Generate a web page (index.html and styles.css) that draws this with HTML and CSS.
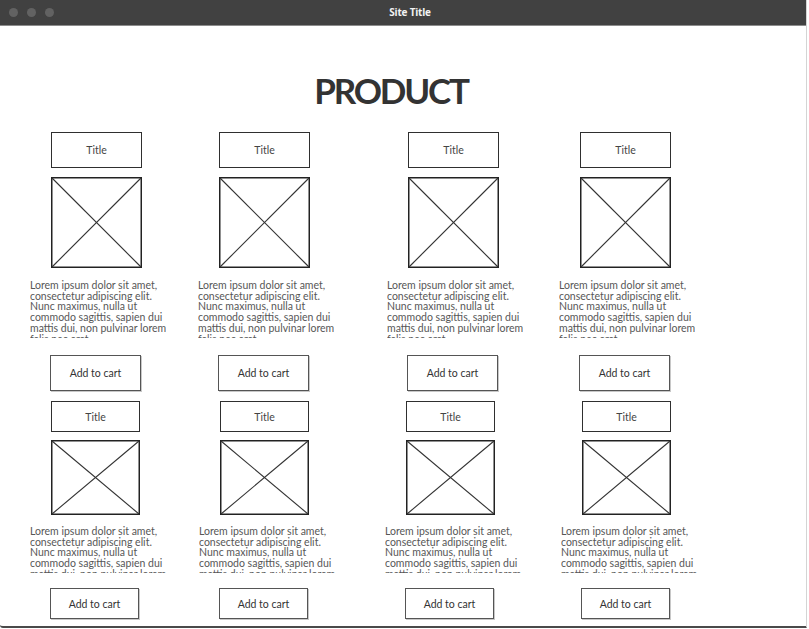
FILE: index.html
```html
<!DOCTYPE html>
<html lang="en">
<head>
<meta charset="utf-8">
<title>Site Title</title>
<link rel="stylesheet" href="styles.css">
</head>
<body>
<div class="window">
  <div class="titlebar">
    <div class="dots"><span class="dot"></span><span class="dot"></span><span class="dot"></span></div>
    <div class="site-title">Site Title</div>
  </div>
  <main class="content">
    <h1 class="heading">PRODUCT</h1>

    <section class="row row-top">
      <div class="card">
        <div class="title-box">Title</div>
        <svg class="placeholder" viewBox="0 0 91 91" preserveAspectRatio="none"><rect x="0.75" y="0.75" width="89.5" height="89.5"/><line x1="1" y1="1" x2="90" y2="90"/><line x1="90" y1="1" x2="1" y2="90"/></svg>
        <p class="desc">Lorem ipsum dolor sit amet,<br>consectetur adipiscing elit.<br>Nunc maximus, nulla ut<br>commodo sagittis, sapien dui<br>mattis dui, non pulvinar lorem<br>felis nec erat.</p>
        <button class="cart-btn">Add to cart</button>
      </div>
      <div class="card">
        <div class="title-box">Title</div>
        <svg class="placeholder" viewBox="0 0 91 91" preserveAspectRatio="none"><rect x="0.75" y="0.75" width="89.5" height="89.5"/><line x1="1" y1="1" x2="90" y2="90"/><line x1="90" y1="1" x2="1" y2="90"/></svg>
        <p class="desc">Lorem ipsum dolor sit amet,<br>consectetur adipiscing elit.<br>Nunc maximus, nulla ut<br>commodo sagittis, sapien dui<br>mattis dui, non pulvinar lorem<br>felis nec erat.</p>
        <button class="cart-btn">Add to cart</button>
      </div>
      <div class="card">
        <div class="title-box">Title</div>
        <svg class="placeholder" viewBox="0 0 91 91" preserveAspectRatio="none"><rect x="0.75" y="0.75" width="89.5" height="89.5"/><line x1="1" y1="1" x2="90" y2="90"/><line x1="90" y1="1" x2="1" y2="90"/></svg>
        <p class="desc">Lorem ipsum dolor sit amet,<br>consectetur adipiscing elit.<br>Nunc maximus, nulla ut<br>commodo sagittis, sapien dui<br>mattis dui, non pulvinar lorem<br>felis nec erat.</p>
        <button class="cart-btn">Add to cart</button>
      </div>
      <div class="card">
        <div class="title-box">Title</div>
        <svg class="placeholder" viewBox="0 0 91 91" preserveAspectRatio="none"><rect x="0.75" y="0.75" width="89.5" height="89.5"/><line x1="1" y1="1" x2="90" y2="90"/><line x1="90" y1="1" x2="1" y2="90"/></svg>
        <p class="desc">Lorem ipsum dolor sit amet,<br>consectetur adipiscing elit.<br>Nunc maximus, nulla ut<br>commodo sagittis, sapien dui<br>mattis dui, non pulvinar lorem<br>felis nec erat.</p>
        <button class="cart-btn">Add to cart</button>
      </div>
    </section>

    <section class="row row-bottom">
      <div class="card">
        <div class="title-box">Title</div>
        <svg class="placeholder" viewBox="0 0 89 75" preserveAspectRatio="none"><rect x="0.75" y="0.75" width="87.5" height="73.5"/><line x1="1" y1="1" x2="88" y2="74"/><line x1="88" y1="1" x2="1" y2="74"/></svg>
        <p class="desc">Lorem ipsum dolor sit amet,<br>consectetur adipiscing elit.<br>Nunc maximus, nulla ut<br>commodo sagittis, sapien dui<br>mattis dui, non pulvinar lorem</p>
        <button class="cart-btn">Add to cart</button>
      </div>
      <div class="card">
        <div class="title-box">Title</div>
        <svg class="placeholder" viewBox="0 0 89 75" preserveAspectRatio="none"><rect x="0.75" y="0.75" width="87.5" height="73.5"/><line x1="1" y1="1" x2="88" y2="74"/><line x1="88" y1="1" x2="1" y2="74"/></svg>
        <p class="desc">Lorem ipsum dolor sit amet,<br>consectetur adipiscing elit.<br>Nunc maximus, nulla ut<br>commodo sagittis, sapien dui<br>mattis dui, non pulvinar lorem</p>
        <button class="cart-btn">Add to cart</button>
      </div>
      <div class="card">
        <div class="title-box">Title</div>
        <svg class="placeholder" viewBox="0 0 89 75" preserveAspectRatio="none"><rect x="0.75" y="0.75" width="87.5" height="73.5"/><line x1="1" y1="1" x2="88" y2="74"/><line x1="88" y1="1" x2="1" y2="74"/></svg>
        <p class="desc">Lorem ipsum dolor sit amet,<br>consectetur adipiscing elit.<br>Nunc maximus, nulla ut<br>commodo sagittis, sapien dui<br>mattis dui, non pulvinar lorem</p>
        <button class="cart-btn">Add to cart</button>
      </div>
      <div class="card">
        <div class="title-box">Title</div>
        <svg class="placeholder" viewBox="0 0 89 75" preserveAspectRatio="none"><rect x="0.75" y="0.75" width="87.5" height="73.5"/><line x1="1" y1="1" x2="88" y2="74"/><line x1="88" y1="1" x2="1" y2="74"/></svg>
        <p class="desc">Lorem ipsum dolor sit amet,<br>consectetur adipiscing elit.<br>Nunc maximus, nulla ut<br>commodo sagittis, sapien dui<br>mattis dui, non pulvinar lorem</p>
        <button class="cart-btn">Add to cart</button>
      </div>
    </section>
  </main>
</div>
</body>
</html>
```

FILE: styles.css
```css
* { box-sizing: border-box; }

html, body {
  margin: 0;
  padding: 0;
  background: #ffffff;
}

body {
  font-family: Lato, "Open Sans", "Liberation Sans", sans-serif;
  color: #333;
}

.window {
  width: 807px;
  height: 628px;
  border-right: 1px solid #d4d4d4;
  border-bottom: 2px solid #4a4a4a;
  border-bottom-left-radius: 3px;
  overflow: hidden;
  display: flex;
  flex-direction: column;
}

.titlebar {
  height: 26px;
  flex: none;
  background: #414141;
  border-bottom: 1px solid #8c8c8c;
  display: flex;
  align-items: center;
  position: relative;
}

.dots {
  display: flex;
  gap: 9px;
  padding-left: 9px;
  padding-bottom: 1px;
}

.dot {
  width: 9px;
  height: 9px;
  border-radius: 50%;
  background: #626262;
}

.site-title {
  position: absolute;
  left: 0;
  right: -14px;
  top: 5px;
  text-align: center;
  color: #f2f2f2;
  font-family: "Open Sans", "Liberation Sans", sans-serif;
  font-weight: 700;
  font-size: 10px;
  line-height: 14px;
  letter-spacing: -0.2px;
}

.content {
  flex: 1;
}

.heading {
  margin: 46px 0 0 0;
  padding-right: 24px;
  text-align: center;
  font-family: Lato, "Open Sans", sans-serif;
  font-weight: 700;
  font-size: 35px;
  line-height: 36px;
  letter-spacing: -2.2px;
  color: #333333;
}

.row {
  display: grid;
  padding-left: 30px;
}

.row-top {
  margin-top: 24px;
  grid-template-columns: 168px 189px 172px 1fr;
}

.row-bottom {
  margin-top: 10px;
  grid-template-columns: 169px 186px 176px 1fr;
}

.card {
  display: flex;
  flex-direction: column;
  align-items: flex-start;
}

.title-box {
  margin-left: 21px;
  border: 1px solid #2f2f2f;
  display: flex;
  align-items: center;
  justify-content: center;
  font-size: 10.5px;
  color: #444;
}

.placeholder {
  display: block;
  margin-left: 21px;
  fill: none;
  stroke: #222;
}

.placeholder rect { stroke-width: 1.5; }
.placeholder line { stroke-width: 1.1; stroke: #333; }

.desc {
  margin: 0;
  font-size: 10.5px;
  line-height: 10.7px;
  color: #575757;
  white-space: nowrap;
  overflow: hidden;
}

.cart-btn {
  margin-left: 20px;
  padding: 0;
  background: #fff;
  border: 1px solid #555;
  box-shadow: 1px 1px 0 #c8c8c8;
  font-family: Lato, "Open Sans", sans-serif;
  font-size: 10.5px;
  color: #333;
  cursor: pointer;
}

.row-top .title-box { width: 91px; height: 36px; }
.row-top .placeholder { width: 91px; height: 91px; margin-top: 9px; }
.row-top .desc { margin-top: 12px; height: 58px; }
.row-top .cart-btn { width: 91px; height: 36px; margin-top: 17px; }

.row-bottom .title-box { width: 89px; height: 31px; }
.row-bottom .placeholder { width: 89px; height: 75px; margin-top: 8px; }
.row-bottom .desc { margin-top: 11px; height: 47px; }
.row-bottom .cart-btn { width: 89px; height: 31px; margin-top: 15px; }
```
